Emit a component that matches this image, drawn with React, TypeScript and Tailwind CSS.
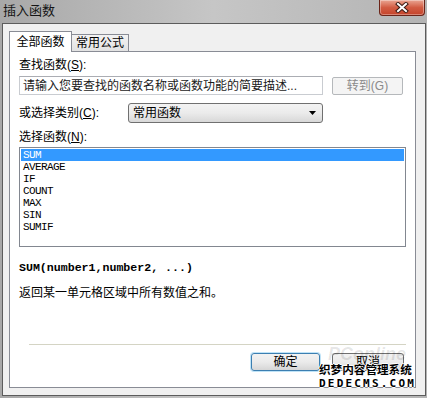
import React from 'react'

const cjk = '"Liberation Sans","Noto Sans CJK SC",sans-serif'
const mono = '"Liberation Mono","Noto Sans CJK SC",monospace'

const funcs = ['SUM', 'AVERAGE', 'IF', 'COUNT', 'MAX', 'SIN', 'SUMIF']

function CloseButton() {
  return (
    <div className="w-[46px] h-[16px] rounded-b-[4px] border border-t-0 border-[#6b2418] bg-gradient-to-b from-[#e9a593] via-[#d25c43] to-[#c4432a] flex items-center justify-center shadow-[inset_0_0_0_1px_rgba(255,255,255,0.35)]">
      <svg width="14" height="11" viewBox="0 0 14 11">
        <path d="M3 2 L11 9 M11 2 L3 9" stroke="#3a1a14" strokeWidth="4" strokeLinecap="square" />
        <path d="M3 2 L11 9 M11 2 L3 9" stroke="#ffffff" strokeWidth="2" strokeLinecap="square" />
      </svg>
    </div>
  )
}

export default function App() {
  return (
    <div
      className="w-[427px] h-[398px] flex flex-col bg-gradient-to-r from-[#a8a8a8] via-[#c6c6c6] to-[#b4b4b4] relative overflow-hidden text-black"
      style={{ fontFamily: cjk }}
    >
      {/* title bar */}
      <div className="h-[23px] flex items-start justify-between shrink-0">
        <span className="ml-[3px] mt-[4px] text-[13px] leading-[14px] text-[#151515]">插入函数</span>
        <div className="mr-[2px]">
          <CloseButton />
        </div>
      </div>

      {/* client area */}
      <div className="ml-[2px] w-[424px] h-[373px] border border-[#5c5c5c] bg-[#f0f0f0] pl-[6px] pr-[9px] pt-[7px] pb-[7px] flex flex-col">
        {/* tabs */}
        <div className="flex items-end h-[21px] -mb-px relative z-10">
          <div className="w-[63px] h-[21px] border border-b-0 border-[#898c95] bg-white flex items-center justify-center text-[12px] leading-[12px]">
            全部函数
          </div>
          <div className="w-[57px] h-[18px] border border-l-0 border-[#898c95] bg-gradient-to-b from-[#f3f3f3] to-[#e2e2e2] flex items-center justify-center text-[12px] leading-[12px]">
            常用公式
          </div>
        </div>

        {/* panel */}
        <div className="flex-1 border border-[#898c95] bg-white pl-[9px] pr-[9px] pt-[7px] flex flex-col text-[12px] leading-[12px]">
          <div>
            查找函数(<span className="underline">S</span>):
          </div>

          <div className="mt-[5px] flex items-center">
            <div className="w-[304px] h-[19px] border border-[#c9ccd1] border-t-[#abadb3] flex items-center pl-[3px] text-[#1a1a1a] whitespace-nowrap overflow-hidden">
              请输入您要查找的函数名称或函数功能的简要描述...
            </div>
            <div className="ml-[9px] w-[71px] h-[18px] border border-[#b5b8bb] rounded-[2px] bg-[#f4f4f4] flex items-center justify-center text-[#8a8a8a]">
              转到(G)
            </div>
          </div>

          <div className="mt-[8px] flex items-center h-[20px]">
            <div className="w-[109px]">
              或选择类别(<span className="underline">C</span>):
            </div>
            <div className="w-[195px] h-[20px] border border-[#707070] rounded-[3px] bg-gradient-to-b from-[#f3f3f3] via-[#ebebeb] to-[#d8d8d8] flex items-center justify-between pl-[4px] pr-[6px]">
              <span>常用函数</span>
              <svg width="7" height="4" viewBox="0 0 7 4">
                <path d="M0 0 H7 L3.5 4 Z" fill="#000" />
              </svg>
            </div>
          </div>

          <div className="mt-[8px]">
            选择函数(<span className="underline">N</span>):
          </div>

          <div className="mt-[4px] h-[100px] border border-[#828790] p-px flex flex-col">
            {funcs.map((f, i) => (
              <div
                key={f}
                className={`h-[12px] pl-[2px] text-[11px] leading-[12px] tracking-[-0.6px] ${i === 0 ? 'bg-[#3399ff] text-white' : 'text-black'}`}
                style={{ fontFamily: mono }}
              >
                {f}
              </div>
            ))}
          </div>

          <div className="mt-[15px] font-bold text-[11.6px] leading-[12px] whitespace-pre" style={{ fontFamily: mono }}>
            SUM(number1,number2, ...)
          </div>

          <div className="mt-[13px]">返回某一单元格区域中所有数值之和。</div>

          <div className="mt-[45px] ml-[10px] h-px bg-[#d4d4c4]" />

          <div className="mt-[8px] flex justify-end gap-[12px] pr-[2px]">
            <div className="w-[69px] h-[18px] border border-[#3c7fb1] rounded-[3px] bg-gradient-to-b from-[#f2f2f2] via-[#ebebeb] to-[#d6d6d6] shadow-[0_0_0_1px_#bfe3f7] flex items-center justify-center">
              确定
            </div>
            <div className="w-[72px] h-[18px] border border-[#707070] rounded-[3px] bg-gradient-to-b from-[#f2f2f2] via-[#ebebeb] to-[#d6d6d6] flex items-center justify-center">
              取消
            </div>
          </div>
        </div>
      </div>

      {/* watermark */}
      <div className="absolute left-[328px] top-[341px] text-[18px] italic font-bold text-[#000]/10 pointer-events-none" style={{ fontFamily: '"Liberation Sans",sans-serif' }}>
        PConline
      </div>
      <div className="absolute left-[319px] top-[362px] flex flex-col pointer-events-none">
        <span
          className="text-[11.6px] leading-[15px] font-bold text-black whitespace-nowrap"
          style={{ textShadow: '1px 0 #fff,-1px 0 #fff,0 1px #fff,0 -1px #fff' }}
        >
          织梦内容管理系统
        </span>
        <span
          className="text-[11px] leading-[14px] font-bold text-black tracking-[2.2px] whitespace-nowrap"
          style={{ fontFamily: '"DejaVu Sans Mono",monospace', textShadow: '1px 0 #fff,-1px 0 #fff,0 1px #fff,0 -1px #fff' }}
        >
          DEDECMS.COM
        </span>
      </div>
    </div>
  )
}
